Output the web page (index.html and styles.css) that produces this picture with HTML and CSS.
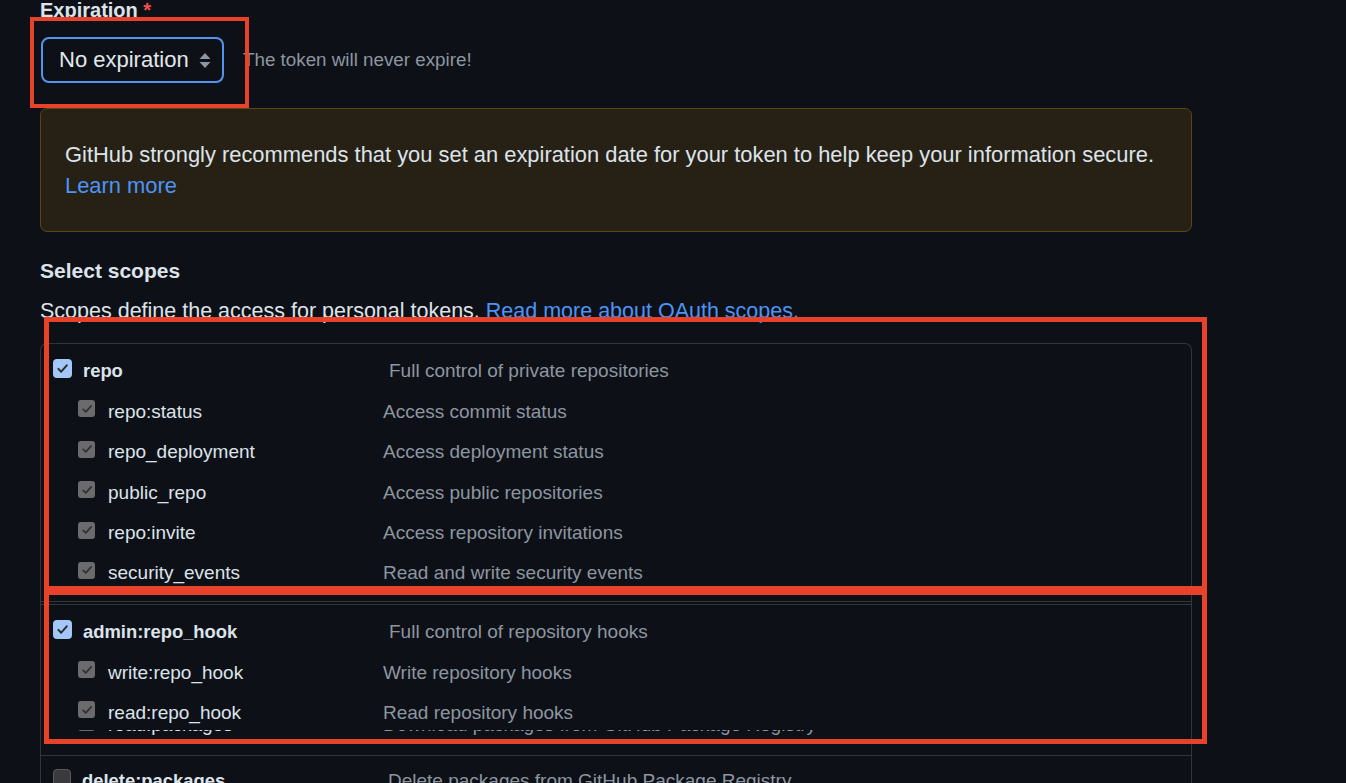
FILE: index.html
```html
<!DOCTYPE html>
<html lang="en">
<head>
<meta charset="utf-8">
<title>Expiration and scopes</title>
<link rel="stylesheet" href="styles.css">
</head>
<body>
<div class="page">
  <div class="field-label">Expiration <span class="req">*</span></div>
  <div class="select-row">
    <div class="select">
      <span>No expiration</span>
      <svg class="arrows" width="12" height="15" viewBox="0 0 12 15"><polygon points="6,0 11.5,6 0.5,6" fill="#8d96a0"/><polygon points="0.5,9 11.5,9 6,15" fill="#8d96a0"/></svg>
    </div>
    <span class="hint">The token will never expire!</span>
  </div>

  <div class="flash">
    GitHub strongly recommends that you set an expiration date for your token to help keep your information secure.<br>
    <a class="link" href="#">Learn more</a>
  </div>

  <h2 class="scopes-title">Select scopes</h2>
  <p class="scopes-desc">Scopes define the access for personal tokens. <a class="link" href="#">Read more about OAuth scopes.</a></p>

  <div class="scopes">
    <div class="group g1">
      <div class="row parent"><span class="cb cb-on"><svg viewBox="0 0 16 16"><path d="M3.6 8.4 L6.6 11.4 L12.6 4.6"/></svg></span><span class="name">repo</span><span class="desc">Full control of private repositories</span></div>
      <div class="row child"><span class="cb cb-dis"><svg viewBox="0 0 16 16"><path d="M3.6 8.4 L6.6 11.4 L12.6 4.6"/></svg></span><span class="name">repo:status</span><span class="desc">Access commit status</span></div>
      <div class="row child"><span class="cb cb-dis"><svg viewBox="0 0 16 16"><path d="M3.6 8.4 L6.6 11.4 L12.6 4.6"/></svg></span><span class="name">repo_deployment</span><span class="desc">Access deployment status</span></div>
      <div class="row child"><span class="cb cb-dis"><svg viewBox="0 0 16 16"><path d="M3.6 8.4 L6.6 11.4 L12.6 4.6"/></svg></span><span class="name">public_repo</span><span class="desc">Access public repositories</span></div>
      <div class="row child"><span class="cb cb-dis"><svg viewBox="0 0 16 16"><path d="M3.6 8.4 L6.6 11.4 L12.6 4.6"/></svg></span><span class="name">repo:invite</span><span class="desc">Access repository invitations</span></div>
      <div class="row child"><span class="cb cb-dis"><svg viewBox="0 0 16 16"><path d="M3.6 8.4 L6.6 11.4 L12.6 4.6"/></svg></span><span class="name">security_events</span><span class="desc">Read and write security events</span></div>
    </div>
    <div class="group g2">
      <div class="row parent"><span class="cb cb-on"><svg viewBox="0 0 16 16"><path d="M3.6 8.4 L6.6 11.4 L12.6 4.6"/></svg></span><span class="name">admin:repo_hook</span><span class="desc">Full control of repository hooks</span></div>
      <div class="row child"><span class="cb cb-dis"><svg viewBox="0 0 16 16"><path d="M3.6 8.4 L6.6 11.4 L12.6 4.6"/></svg></span><span class="name">write:repo_hook</span><span class="desc">Write repository hooks</span></div>
      <div class="row child"><span class="cb cb-dis"><svg viewBox="0 0 16 16"><path d="M3.6 8.4 L6.6 11.4 L12.6 4.6"/></svg></span><span class="name">read:repo_hook</span><span class="desc">Read repository hooks</span></div>
    </div>
    <div class="clip-row">
      <div class="row child"><span class="cb cb-dis"><svg viewBox="0 0 16 16"><path d="M3.6 8.4 L6.6 11.4 L12.6 4.6"/></svg></span><span class="name">read:packages</span><span class="desc">Download packages from GitHub Package Registry</span></div>
    </div>
    <div class="group g3">
      <div class="row parent"><span class="cb cb-off"></span><span class="name">delete:packages</span><span class="desc">Delete packages from GitHub Package Registry</span></div>
    </div>
  </div>

  <div class="mark mark-a"></div>
  <div class="mark mark-b"></div>
  <div class="mark mark-c"></div>
</div>
</body>
</html>
```

FILE: styles.css
```css
* { box-sizing: border-box; }

html, body {
  margin: 0;
  padding: 0;
  background: #0d1117;
  height: 783px;
  overflow: hidden;
}

body {
  font-family: "Liberation Sans", Arial, sans-serif;
  color: #dde3ea;
}

.page {
  position: relative;
  padding-left: 40px;
  width: 1346px;
}

.field-label {
  font-size: 20px;
  line-height: 20px;
  font-weight: bold;
  color: #dde3ea;
}

.req { color: #f85149; }

.select-row {
  margin-top: 17px;
  height: 46px;
  display: flex;
  align-items: center;
}

.select {
  width: 183px;
  height: 46px;
  margin-left: 1px;
  border: 2px solid #5394ec;
  border-radius: 8px;
  padding: 0 11px 0 16px;
  display: flex;
  align-items: center;
  justify-content: space-between;
  font-size: 22px;
  color: #e2e7ec;
}

.arrows { display: block; margin-top: 1px; }

.hint {
  margin-left: 19px;
  font-size: 18.8px;
  color: #8d96a0;
}

.flash {
  margin-top: 25px;
  width: 1152px;
  background: #272115;
  border: 1px solid #5b4518;
  border-radius: 7px;
  padding: 30px 24px 30px;
  font-size: 21.9px;
  line-height: 31px;
  color: #dde3ea;
}

.link {
  color: #4c94f5;
  text-decoration: none;
}

.scopes-title {
  margin: 25px 0 0;
  font-size: 21px;
  line-height: 28px;
  font-weight: bold;
  color: #dde3ea;
}

.scopes-desc {
  margin: 12px 0 0;
  font-size: 21.5px;
  line-height: 28px;
  color: #dde3ea;
}

.scopes {
  margin-top: 18px;
  width: 1152px;
  border: 1px solid #30363d;
  border-bottom: none;
  border-radius: 7px 7px 0 0;
}

.g1 {
  padding: 7.3px 0 7.3px;
  border-bottom: 1px solid #30363d;
}

.g2 {
  margin-top: 2px;
  border-top: 1px solid #30363d;
  padding-top: 7px;
}

.g3 {
  margin-top: 17px;
  border-top: 1px solid #30363d;
  padding-top: 5px;
}

.row {
  height: 40.4px;
  display: flex;
  align-items: center;
  font-size: 19px;
  white-space: nowrap;
}

.row.parent { padding-left: 12px; }
.row.child { padding-left: 37px; }

.row .name { color: #dde3ea; }
.row .desc { color: #8d96a0; }

.row.parent .name {
  margin-left: 11px;
  width: 306px;
  font-weight: bold;
  font-size: 18.4px;
}

.row.child .name {
  margin-left: 13px;
  width: 275px;
}

.cb {
  display: flex;
  align-items: center;
  justify-content: center;
  flex: none;
  margin-top: -6px;
}

.cb svg {
  fill: none;
  stroke: #2c2c2e;
  stroke-width: 2.1;
  stroke-linecap: round;
  stroke-linejoin: round;
}

.cb-on {
  width: 19px;
  height: 19px;
  border-radius: 4px;
  background: #a3c7f7;
}
.cb-on svg { width: 15px; height: 15px; }

.cb-dis {
  width: 17px;
  height: 17px;
  border-radius: 3px;
  background: #6b6b6d;
}
.cb-dis svg { width: 14px; height: 14px; stroke: #323234; }

.cb-off {
  width: 18px;
  height: 18px;
  border-radius: 4px;
  background: #3a3a3c;
  border: 1px solid #59595c;
}

.clip-row {
  margin-top: -3.2px;
  height: 8px;
  overflow: hidden;
}

.clip-row .row {
  margin-top: -25px;
}

.mark {
  position: absolute;
  border-style: solid;
  border-color: #e8432a;
  pointer-events: none;
}

.mark-a {
  left: 30px;
  top: 17px;
  width: 219px;
  height: 91px;
  border-width: 4.5px;
}

.mark-b {
  left: 44px;
  top: 317px;
  width: 1163px;
  height: 274px;
  border-width: 5px;
}

.mark-c {
  left: 44px;
  top: 590px;
  width: 1163px;
  height: 154px;
  border-width: 5px;
}
```
